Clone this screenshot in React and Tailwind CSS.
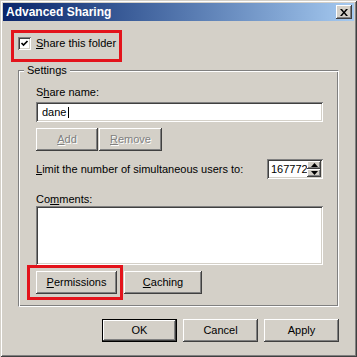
import React from "react";

const raised =
  "shadow-[inset_-1px_-1px_0_#404040,inset_1px_1px_0_#ffffff,inset_-2px_-2px_0_#808080,inset_2px_2px_0_#d4d0c8]";
const defaultRaised =
  "shadow-[inset_0_0_0_1px_#000000,inset_-2px_-2px_0_#404040,inset_2px_2px_0_#ffffff,inset_-3px_-3px_0_#808080,inset_3px_3px_0_#d4d0c8]";
const sunken =
  "shadow-[inset_1px_1px_0_#808080,inset_-1px_-1px_0_#ffffff,inset_2px_2px_0_#404040,inset_-2px_-2px_0_#d4d0c8]";

function Button({ children, width, isDefault, disabled }) {
  return (
    <div
      className={`flex items-center justify-center h-[23px] bg-[#d4d0c8] ${
        isDefault ? defaultRaised : raised
      } ${width} ${
        disabled ? "text-[#808080] [text-shadow:1px_1px_0_#ffffff]" : "text-black"
      }`}
    >
      {children}
    </div>
  );
}

function Arrow({ up }) {
  return (
    <svg width="7" height="4" viewBox="0 0 7 4">
      {up ? (
        <path d="M3.5 0 L7 4 L0 4 Z" fill="#000" />
      ) : (
        <path d="M0 0 L7 0 L3.5 4 Z" fill="#000" />
      )}
    </svg>
  );
}

export default function App() {
  return (
    <div className="w-[357px] h-[357px] bg-[#d4d0c8] flex flex-col text-[11px] leading-[13px] text-black [font-family:'Liberation_Sans',Arial,sans-serif] shadow-[inset_1px_1px_0_#d4d0c8,inset_-1px_-1px_0_#404040,inset_2px_2px_0_#ffffff,inset_-2px_-2px_0_#808080]">
      {/* title bar */}
      <div className="mx-[3px] mt-[3px] h-[18px] flex items-center justify-between bg-linear-to-r from-[#0a246a] to-[#a6caf0] pl-[3px] pr-[2px]">
        <span className="text-white font-bold text-[12px]">Advanced Sharing</span>
        <div className={`w-[16px] h-[14px] bg-[#d4d0c8] flex items-center justify-center ${raised}`}>
          <svg width="8" height="7" viewBox="0 0 8 7">
            <path d="M0 0 H2 L4 2.5 L6 0 H8 L5 3.5 L8 7 H6 L4 4.5 L2 7 H0 L3 3.5 Z" fill="#000" />
          </svg>
        </div>
      </div>

      {/* share this folder */}
      <div className="mt-[9px] ml-[11px] w-[111px] h-[32px] border-[3px] border-[#e3131b] flex items-start pl-[4px] pt-[4px]">
        <div className="flex items-center gap-[5px]">
          <div className={`w-[13px] h-[13px] bg-white flex items-center justify-center ${sunken}`}>
            <svg width="9" height="9" viewBox="0 0 9 9">
              <path d="M1.5 4 L3.5 6 L7.5 2" stroke="#000" strokeWidth="1.7" fill="none" />
            </svg>
          </div>
          <span>
            <u>S</u>hare this folder
          </span>
        </div>
      </div>

      {/* settings group */}
      <div className="relative mt-[8px] ml-[18px] w-[321px] h-[237px] border border-t-[#808080] border-l-[#808080] border-b-white border-r-white shadow-[inset_1px_1px_0_#ffffff,inset_-1px_-1px_0_#808080]">
        <span className="absolute left-[5px] top-[-7px] px-[3px] bg-[#d4d0c8]">Settings</span>
        <div className="flex flex-col pl-[17px]">
          <span className="mt-[15px]">
            S<u>h</u>are name:
          </span>
          <div className={`mt-[3px] w-[287px] h-[20px] bg-white flex items-center pl-[6px] ${sunken}`}>
            <span>dane</span>
            <span className="ml-[2px] w-[1px] h-[11px] bg-black" />
          </div>
          <div className="mt-[6px] flex gap-[1px]">
            <Button width="w-[62px]" disabled>
              <span>
                <u>A</u>dd
              </span>
            </Button>
            <Button width="w-[63px]" disabled>
              <span>
                <u>R</u>emove
              </span>
            </Button>
          </div>
          <div className="mt-[8px] w-[287px] flex items-center justify-between">
            <span>
              <u>L</u>imit the number of simultaneous users to:
            </span>
            <div className={`w-[56px] h-[20px] bg-white flex p-[2px] ${sunken}`}>
              <div className="flex-1 overflow-hidden flex items-center pl-[2px] whitespace-nowrap">
                16777216
              </div>
              <div className="w-[14px] flex flex-col">
                <div className={`h-[8px] bg-[#d4d0c8] flex items-center justify-center ${raised}`}>
                  <Arrow up />
                </div>
                <div className={`h-[8px] bg-[#d4d0c8] flex items-center justify-center ${raised}`}>
                  <Arrow />
                </div>
              </div>
            </div>
          </div>
          <span className="mt-[14px]">
            Co<u>m</u>ments:
          </span>
          <div className={`w-[287px] h-[59px] bg-white ${sunken}`} />
          <div className="flex items-start">
            <div className="ml-[-9px] border-[3px] border-[#e3131b] pt-[3px] pb-[3px] pl-[6px] pr-[3px]">
              <Button width="w-[81px]">
                <span>
                  <u>P</u>ermissions
                </span>
              </Button>
            </div>
            <div className="ml-[1px] mt-[6px]">
              <Button width="w-[78px]">
                <span>
                  <u>C</u>aching
                </span>
              </Button>
            </div>
          </div>
        </div>
      </div>

      {/* dialog buttons */}
      <div className="mt-[12px] flex justify-end gap-[6px] pr-[18px]">
        <Button width="w-[75px]" isDefault>
          OK
        </Button>
        <Button width="w-[75px]">Cancel</Button>
        <Button width="w-[75px]">Apply</Button>
      </div>
    </div>
  );
}
